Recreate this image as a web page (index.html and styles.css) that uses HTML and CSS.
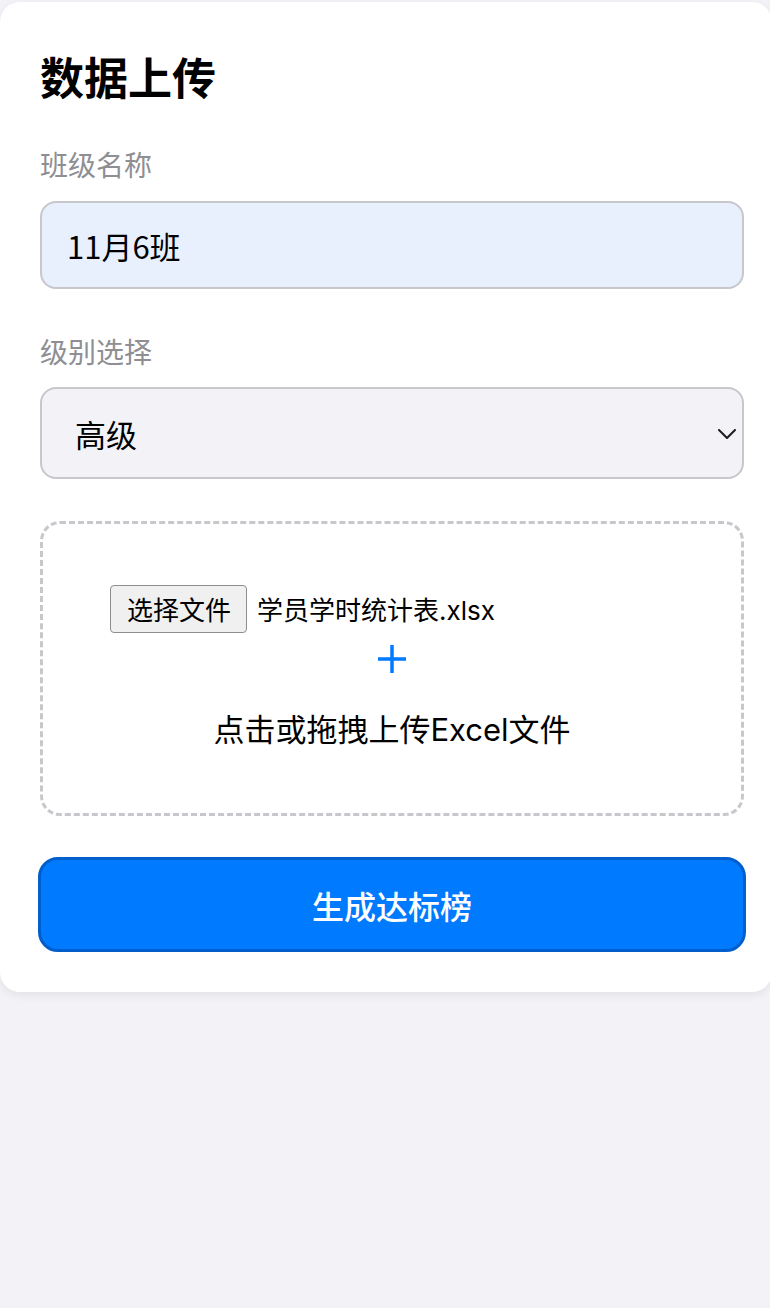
FILE: index.html
```html
<!DOCTYPE html>
<html lang="zh-CN">
<head>
<meta charset="utf-8">
<title>数据上传</title>
<link rel="stylesheet" href="styles.css">
</head>
<body>
<div class="card">
  <h1 class="title">数据上传</h1>
  <label class="label" for="cls">班级名称</label>
  <input id="cls" class="text-input" type="text" value="11月6班">
  <label class="label label-second" for="lvl">级别选择</label>
  <div class="select-wrap">
    <select id="lvl" class="select">
      <option>高级</option>
      <option>中级</option>
      <option>初级</option>
    </select>
    <svg class="chevron" width="18" height="10" viewBox="0 0 18 10"><path d="M1 1 L9 9 L17 1" fill="none" stroke="#1c1c1e" stroke-width="2" stroke-linecap="round" stroke-linejoin="round"/></svg>
  </div>
  <div class="drop">
    <div class="file-row">
      <span class="file-btn">选择文件</span>
      <span class="file-name">学员学时统计表.xlsx</span>
    </div>
    <svg class="plus" width="28" height="28" viewBox="0 0 28 28"><path d="M14 0 V28 M0 14 H28" stroke="#007aff" stroke-width="3.5"/></svg>
    <div class="drop-text">点击或拖拽上传Excel文件</div>
  </div>
  <button class="submit" type="button">生成达标榜</button>
</div>
</body>
</html>
```

FILE: styles.css
```css
html, body {
  margin: 0;
  padding: 0;
}
body {
  background: #f2f2f7;
  font-family: "Noto Sans CJK SC", "Noto Sans", sans-serif;
  overflow: hidden;
  width: 770px;
  height: 1308px;
}
.card {
  margin-top: 2px;
  width: 772px;
  box-sizing: border-box;
  background: #ffffff;
  border-radius: 20px;
  box-shadow: 0 3px 10px rgba(0, 0, 0, 0.07);
  padding: 48px 28px 40px 40px;
  display: flex;
  flex-direction: column;
}
.title {
  margin: 0;
  font-size: 44px;
  line-height: 52px;
  font-weight: 700;
  color: #000;
}
.label {
  margin-top: 44px;
  margin-bottom: 19px;
  font-size: 28px;
  line-height: 36px;
  color: #8e8e93;
}
.label-second {
  margin-top: 44px;
  margin-bottom: 18px;
}
.text-input {
  box-sizing: border-box;
  width: 704px;
  height: 88px;
  margin: 0;
  padding: 0 25px;
  border: 2px solid #c7c7cc;
  border-radius: 16px;
  background: #e8f0fe;
  font-family: "Noto Sans CJK SC", "Noto Sans", sans-serif;
  font-size: 31px;
  color: #000;
  outline: none;
}
.select-wrap {
  position: relative;
  width: 704px;
  height: 92px;
}
.select {
  appearance: none;
  -webkit-appearance: none;
  box-sizing: border-box;
  width: 100%;
  height: 100%;
  margin: 0;
  padding: 0 33px;
  border: 2px solid #c7c7cc;
  border-radius: 16px;
  background: #f2f2f7;
  font-family: "Noto Sans CJK SC", "Noto Sans", sans-serif;
  font-size: 31px;
  color: #000;
  outline: none;
}
.chevron {
  position: absolute;
  right: 8px;
  top: 42px;
  pointer-events: none;
}
.drop {
  margin-top: 42px;
  box-sizing: border-box;
  width: 704px;
  height: 295px;
  border: 3px dashed #c7c7cc;
  border-radius: 20px;
  display: flex;
  flex-direction: column;
  align-items: center;
  padding-top: 61px;
}
.file-row {
  align-self: flex-start;
  margin-left: 67px;
  display: flex;
  align-items: center;
  gap: 10px;
  height: 47px;
}
.file-btn {
  box-sizing: border-box;
  height: 48px;
  padding: 0 15px 0 16px;
  display: flex;
  align-items: center;
  border: 1px solid #8e8e8e;
  border-radius: 4px;
  background: #f0f0f0;
  font-size: 26px;
  color: #000;
}
.file-name {
  font-family: "Inter", "Noto Sans CJK SC", sans-serif;
  font-size: 26px;
  color: #000;
}
.plus {
  margin-top: 13px;
  display: block;
}
.drop-text {
  margin-top: 37px;
  font-family: "Inter", "Noto Sans CJK SC", sans-serif;
  font-size: 31px;
  line-height: 40px;
  color: #000;
}
.submit {
  margin: 41px 0 0 -2px;
  box-sizing: border-box;
  width: 708px;
  height: 95px;
  border: 3px solid #005fcc;
  border-radius: 20px;
  background: #007aff;
  color: #fff;
  font-family: "Noto Sans CJK SC", "Noto Sans", sans-serif;
  font-size: 32px;
  font-weight: 500;
  padding: 0;
}
```
